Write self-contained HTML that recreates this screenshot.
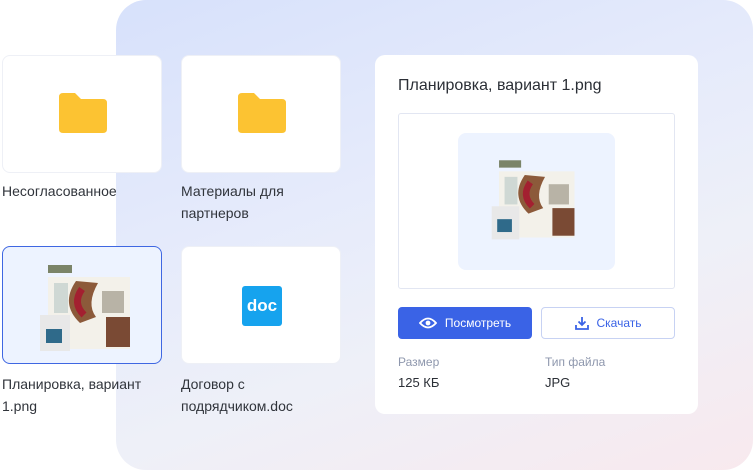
<!DOCTYPE html>
<html><head><meta charset="utf-8"><style>
*{margin:0;padding:0;box-sizing:border-box}
body{width:753px;height:470px;background:#fff;position:relative;overflow:hidden;font-family:"Liberation Sans",sans-serif;color:#2b2f36}
.panel{position:absolute;left:116px;top:0;width:637px;height:470px;border-radius:30px;background:linear-gradient(160deg,#d7e1fb 0%,#e6ebfb 40%,#eef0f8 65%,#f8e9ee 100%)}
.card{position:absolute;width:160px;height:118px;background:#fff;border-radius:8px;border:1px solid #eef0f6}
.lbl{position:absolute;font-size:14px;line-height:22px;color:#30343b}
.folder{position:absolute;left:56px;top:37px;width:48px;height:40px}
.rc{position:absolute;left:375px;top:55px;width:323px;height:359px;background:#fff;border-radius:10px}
.btn{position:absolute;top:252px;width:134px;height:32px;border-radius:4px;font-size:12px;display:flex;align-items:center;justify-content:center;gap:8px}
</style></head><body>
<div class="panel"></div>

<div class="card" style="left:2px;top:55px"><svg class="folder" viewBox="0 0 48 40"><path d="M0 4Q0 0 4 0H16L22 6H44Q48 6 48 10V36Q48 40 44 40H4Q0 40 0 36Z" fill="#fcc332"/></svg></div>
<div class="lbl" style="left:2px;top:180px">Несогласованное</div>
<div class="card" style="left:181px;top:55px"><svg class="folder" viewBox="0 0 48 40"><path d="M0 4Q0 0 4 0H16L22 6H44Q48 6 48 10V36Q48 40 44 40H4Q0 40 0 36Z" fill="#fcc332"/></svg></div>
<div class="lbl" style="left:181px;top:180px">Материалы для<br>партнеров</div>

<div class="card" style="left:2px;top:246px;background:#edf3ff;border:1px solid #3f67e2">
<svg style="position:absolute;left:33px;top:12px" width="100" height="94" viewBox="0 0 100 94">
<rect x="12" y="6" width="24" height="8" fill="#7b8468"/>
<rect x="12" y="18" width="82" height="72" fill="#f3f1ea"/>
<rect x="4" y="56" width="30" height="36" fill="#e8e8e8"/>
<rect x="10" y="70" width="16" height="14" fill="#2f6a8a"/>
<path d="M40 22Q24 45 44 64L60 58Q50 45 62 24Z" fill="#8c5a3a"/>
<path d="M46 30Q36 44 48 56" stroke="#a32030" stroke-width="7" fill="none"/>
<rect x="66" y="32" width="22" height="22" fill="#b8b3a6"/>
<rect x="70" y="58" width="24" height="30" fill="#7a4a34"/>
<rect x="18" y="24" width="14" height="30" fill="#cfd8d4"/>
</svg></div>
<div class="lbl" style="left:2px;top:373px">Планировка, вариант<br>1.png</div>
<div class="card" style="left:181px;top:246px"><div style="position:absolute;left:60px;top:39px;width:40px;height:40px;background:#16a3ee;border-radius:3px;color:#fff;font-size:17px;font-weight:bold;display:flex;align-items:center;justify-content:center">doc</div></div>
<div class="lbl" style="left:181px;top:373px">Договор с<br>подрядчиком.doc</div>

<div class="rc">
<div style="position:absolute;left:23px;top:22px;font-size:16px;color:#2b2f36">Планировка, вариант 1.png</div>
<div style="position:absolute;left:23px;top:58px;width:277px;height:176px;border:1px solid #e2e6f2;border-radius:3px">
<div style="position:absolute;left:59px;top:19px;width:157px;height:137px;background:#edf3ff;border-radius:8px">
<svg style="position:absolute;left:30px;top:17px" width="92" height="96" viewBox="0 0 100 94">
<rect x="12" y="6" width="24" height="8" fill="#7b8468"/>
<rect x="12" y="18" width="82" height="72" fill="#f3f1ea"/>
<rect x="4" y="56" width="30" height="36" fill="#e8e8e8"/>
<rect x="10" y="70" width="16" height="14" fill="#2f6a8a"/>
<path d="M40 22Q24 45 44 64L60 58Q50 45 62 24Z" fill="#8c5a3a"/>
<path d="M46 30Q36 44 48 56" stroke="#a32030" stroke-width="7" fill="none"/>
<rect x="66" y="32" width="22" height="22" fill="#b8b3a6"/>
<rect x="70" y="58" width="24" height="30" fill="#7a4a34"/>
<rect x="18" y="24" width="14" height="30" fill="#cfd8d4"/>
</svg></div></div>
<div class="btn" style="left:23px;background:#3a63e6;color:#fff"><svg width="18" height="12" viewBox="0 0 18 12"><path d="M1 6Q9 -3 17 6Q9 15 1 6Z" fill="none" stroke="#fff" stroke-width="1.8"/><circle cx="9" cy="6" r="2.4" fill="#fff"/></svg>Посмотреть</div>
<div class="btn" style="left:166px;border:1px solid #c7d2f3;color:#3a63e6"><svg width="14" height="14" viewBox="0 0 14 14"><path d="M7 1V9M3.5 5.5L7 9L10.5 5.5M1 9V13H13V9" fill="none" stroke="#3a63e6" stroke-width="1.8"/></svg>Скачать</div>
<div style="position:absolute;left:23px;top:300px;font-size:12px;color:#8e97ad">Размер</div>
<div style="position:absolute;left:23px;top:320px;font-size:13px;color:#2b2f36">125 КБ</div>
<div style="position:absolute;left:170px;top:300px;font-size:12px;color:#8e97ad">Тип файла</div>
<div style="position:absolute;left:170px;top:320px;font-size:13px;color:#2b2f36">JPG</div>
</div>
</body></html>
